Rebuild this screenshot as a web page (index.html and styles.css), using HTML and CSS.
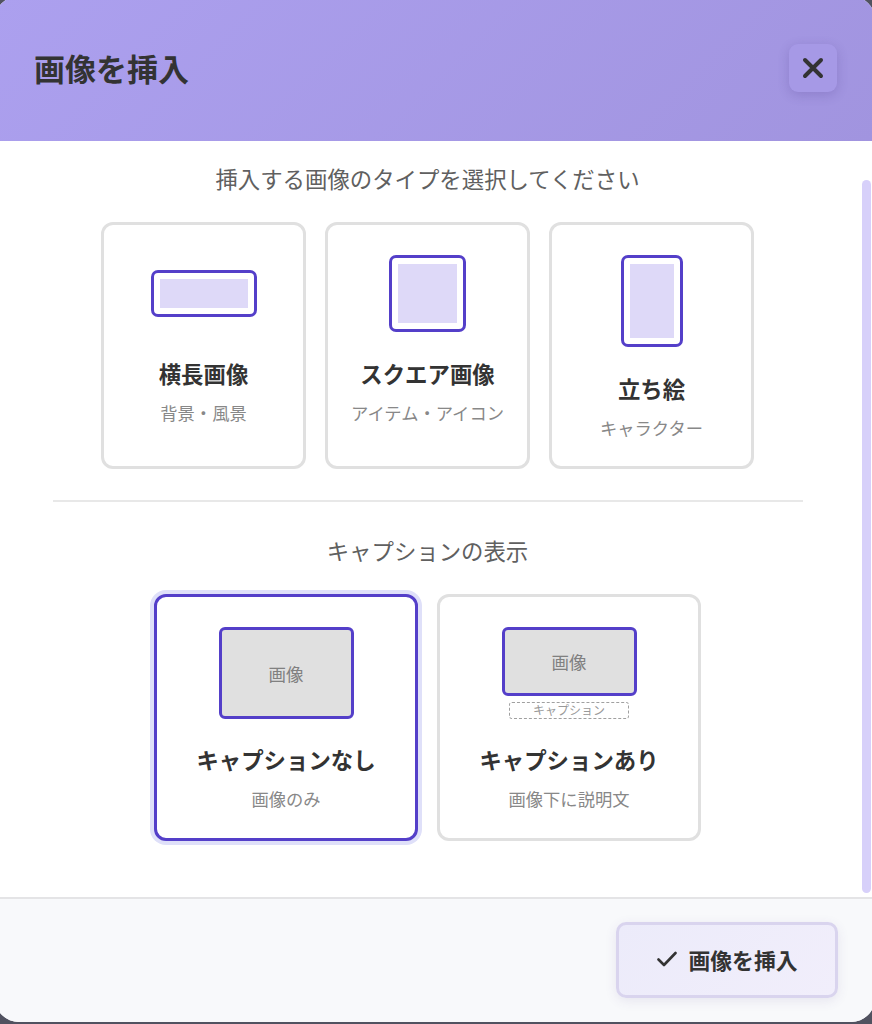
FILE: index.html
```html
<!DOCTYPE html>
<html lang="ja">
<head>
    <meta charset="UTF-8">
    <meta name="viewport" content="width=device-width, initial-scale=1.0">
    <title>画像を挿入</title>
    <link rel="stylesheet" href="styles.css">
</head>
<body>
    <div class="modal">
        <div class="modal-header">
            <h2>画像を挿入</h2>
            <button class="close-btn" aria-label="閉じる">
                <svg width="22" height="22" viewBox="0 0 22 22">
                    <path d="M3 3L19 19M19 3L3 19" fill="none" stroke="#333" stroke-width="4" stroke-linecap="round"/>
                </svg>
            </button>
        </div>
        <div class="modal-body">
            <div class="modal-content">
                <p class="section-title">挿入する画像のタイプを選択してください</p>
                <div class="options">
                    <div class="option type-option">
                        <div class="option-icon"><div class="shape landscape"></div></div>
                        <div class="option-label">横長画像</div>
                        <div class="option-desc">背景・風景</div>
                    </div>
                    <div class="option type-option">
                        <div class="option-icon"><div class="shape square"></div></div>
                        <div class="option-label">スクエア画像</div>
                        <div class="option-desc">アイテム・アイコン</div>
                    </div>
                    <div class="option type-option">
                        <div class="option-icon"><div class="shape portrait"></div></div>
                        <div class="option-label">立ち絵</div>
                        <div class="option-desc">キャラクター</div>
                    </div>
                </div>
                <div class="caption-section">
                    <p class="section-title">キャプションの表示</p>
                    <div class="options">
                        <div class="option caption-option selected">
                            <div class="preview">
                                <div class="preview-image">画像</div>
                            </div>
                            <div class="option-label">キャプションなし</div>
                            <div class="option-desc">画像のみ</div>
                        </div>
                        <div class="option caption-option">
                            <div class="preview">
                                <div class="preview-image short">画像</div>
                                <div class="preview-caption">キャプション</div>
                            </div>
                            <div class="option-label">キャプションあり</div>
                            <div class="option-desc">画像下に説明文</div>
                        </div>
                    </div>
                </div>
            </div>
            <div class="scrollbar"><div class="scrollbar-thumb"></div></div>
        </div>
        <div class="modal-footer">
            <button class="insert-btn">
                <svg width="20" height="16" viewBox="0 0 20 16">
                    <path d="M1.5 8.5L7 14L18.5 2" fill="none" stroke="#333" stroke-width="2.6" stroke-linecap="round" stroke-linejoin="round"/>
                </svg>
                <span>画像を挿入</span>
            </button>
        </div>
    </div>
</body>
</html>
```
FILE: styles.css
```css
* {
    box-sizing: border-box;
}
body {
    margin: 0;
    height: 1024px;
    overflow: hidden;
    background: #515260;
    font-family: "Noto Sans CJK JP", sans-serif;
    color: #333;
}
/* the dialog is a little larger than the window */
.modal {
    display: flex;
    flex-direction: column;
    width: 880px;
    height: 1026px;
    margin: -4px 0 0 -5px;
    border-radius: 24px;
    background: white;
    overflow: hidden;
}
.modal-header {
    display: flex;
    flex: none;
    align-items: center;
    justify-content: space-between;
    height: 145px;
    padding: 0 38px 0 39px;
    background: linear-gradient(135deg, #aca0ef 0%, #a194df 100%);
}
.modal-header h2 {
    margin: 0 0 2px;
    font-size: 31px;
    line-height: 46px;
    font-weight: 700;
}
.close-btn {
    display: flex;
    align-items: center;
    justify-content: center;
    width: 48px;
    height: 48px;
    margin-bottom: 1px;
    padding: 0;
    border: none;
    border-radius: 9px;
    background: #a699e6;
    box-shadow: 0 3px 12px rgba(60, 40, 120, 0.2);
}
.modal-body {
    display: flex;
    flex: 1;
}
.modal-content {
    flex: 1;
    padding: 20px 57.5px 0 57.5px;
}
.section-title {
    margin: 0;
    font-size: 22.4px;
    line-height: 34px;
    color: #606060;
    text-align: center;
}
.options {
    display: flex;
    justify-content: center;
    gap: 19px;
    margin-top: 27px;
}
.option {
    height: 247px;
    padding-top: 30px;
    border: 3px solid #e0e0e0;
    border-radius: 12px;
    background: white;
    text-align: center;
}
.type-option {
    width: 205px;
}
.caption-option {
    width: 264px;
}
.option.selected {
    border-color: #543fc9;
    box-shadow: 0 0 0 4px #dfe0f9;
}
.option-icon {
    display: flex;
    align-items: center;
    justify-content: center;
    min-height: 77px;
    margin-bottom: 26px;
}
.shape {
    padding: 6px;
    border: 3px solid #543fc9;
    border-radius: 7px;
    background: #ded9f8 content-box;
}
.landscape {
    width: 106px;
    height: 47px;
}
.square {
    width: 77px;
    height: 77px;
}
.portrait {
    width: 62px;
    height: 92px;
}
.option-label {
    font-size: 22.4px;
    line-height: 31px;
    font-weight: 700;
}
.option-desc {
    margin-top: 11px;
    font-size: 17.3px;
    line-height: 26px;
    color: #888;
}
.caption-section {
    margin-top: 31px;
    padding-top: 31px;
    border-top: 2px solid #e8e8e8;
}
.preview {
    display: flex;
    flex-direction: column;
    align-items: center;
    height: 92px;
    margin-bottom: 25px;
}
.preview-image {
    display: flex;
    align-items: center;
    justify-content: center;
    width: 135px;
    height: 92px;
    border: 3px solid #543fc9;
    border-radius: 6px;
    background: #e0e0e0;
    font-size: 17.5px;
    color: #808080;
}
.preview-image.short {
    height: 69px;
}
.preview-caption {
    width: 120px;
    height: 17px;
    margin-top: 6px;
    border: 1px dashed #a0a0a0;
    border-radius: 3px;
    font-size: 12px;
    line-height: 13px;
    color: #999;
}
.scrollbar {
    flex: none;
    width: 15px;
    padding: 39px 4px 4px 2px;
}
.scrollbar-thumb {
    height: 100%;
    border-radius: 5px;
    background: #d7d0fa;
}
.modal-footer {
    display: flex;
    flex: none;
    align-items: center;
    justify-content: flex-end;
    height: 125px;
    padding: 0 37px 2px 0;
    border-top: 2px solid #e4e4e6;
    background: #f8f9fb;
}
.insert-btn {
    display: flex;
    align-items: center;
    justify-content: center;
    gap: 12px;
    width: 222px;
    height: 76px;
    padding: 0;
    border: 3px solid #d9d4ee;
    border-radius: 10px;
    background: linear-gradient(135deg, #ecebfa, #f1eefb);
    box-shadow: 0 3px 12px rgba(80, 60, 140, 0.1);
    font-family: inherit;
    font-size: 21.8px;
    font-weight: 700;
    line-height: 32px;
    color: #333;
}
.insert-btn svg {
    margin-bottom: 2px;
}
```
